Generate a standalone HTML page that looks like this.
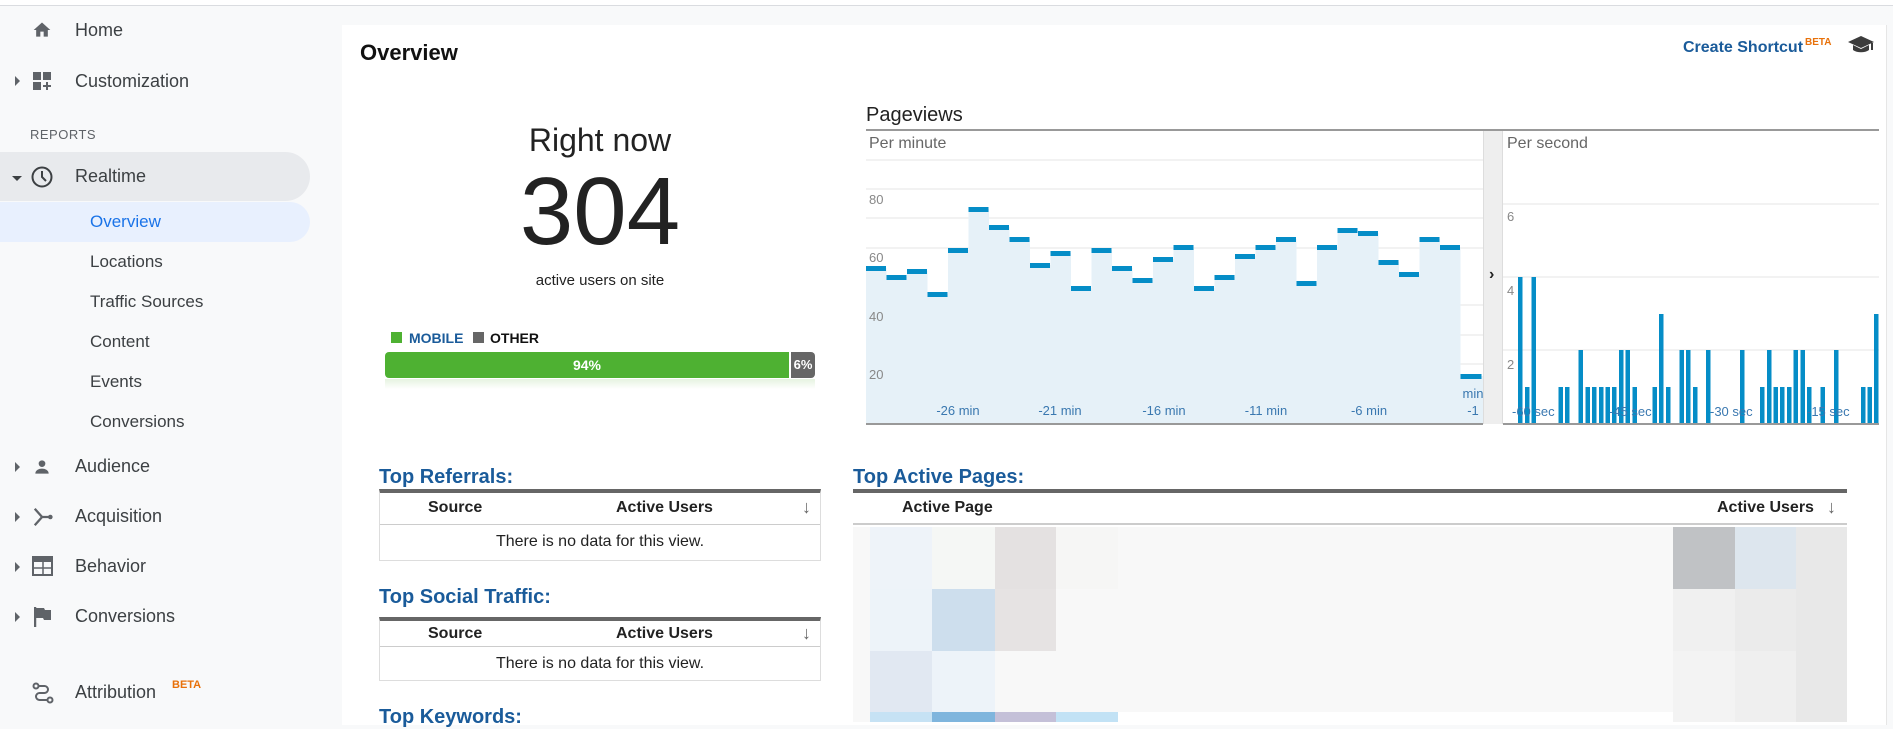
<!DOCTYPE html>
<html><head><meta charset="utf-8">
<style>
*{margin:0;padding:0;box-sizing:border-box}
body{width:1893px;height:722px;overflow:hidden;background:#f8f9fa;font-family:"Liberation Sans",Arial,sans-serif;position:relative;color:#3c4043}
.a{position:absolute;white-space:nowrap}
.nav{font-size:18px;color:#3c4043}
.sub{font-size:17px;color:#3c4043;left:90px}
.tri{position:absolute;width:0;height:0;border-top:5px solid transparent;border-bottom:5px solid transparent;border-left:5px solid #5f6368}
.h{font-weight:bold;color:#1a5b9a;font-size:20px}
.th{font-weight:bold;font-size:16px;color:#222}
</style></head><body>
<div class="a" style="left:0;top:0;width:1893px;height:6px;background:#fff;border-bottom:1px solid #dadce0"></div>
<!-- sidebar -->
<svg class="a" style="left:32px;top:20px" width="20" height="20" viewBox="0 0 24 24"><path d="M10 20v-6h4v6h5v-8h3L12 3 2 12h3v8z" fill="#5f6368"/></svg>
<div class="a nav" style="left:75px;top:20px">Home</div>
<div class="tri" style="left:15px;top:76px"></div>
<svg class="a" style="left:32px;top:71px" width="20" height="20" viewBox="0 0 20 20"><rect x="1" y="1" width="8" height="8" fill="#5f6368"/><rect x="11" y="1" width="8" height="8" fill="#5f6368"/><rect x="1" y="11" width="8" height="8" fill="#5f6368"/><path d="M15 11v8M11 15h8" stroke="#5f6368" stroke-width="2"/></svg>
<div class="a nav" style="left:75px;top:71px">Customization</div>
<div class="a" style="left:30px;top:127px;font-size:13px;color:#5f6368;letter-spacing:.5px">REPORTS</div>
<div class="a" style="left:0;top:152px;width:310px;height:49px;background:#e8eaed;border-radius:0 25px 25px 0"></div>
<div class="a" style="left:12px;top:176px;width:0;height:0;border-left:5px solid transparent;border-right:5px solid transparent;border-top:5px solid #3c4043"></div>
<svg class="a" style="left:30px;top:165px" width="24" height="24" viewBox="0 0 24 24"><circle cx="12" cy="12" r="9.5" fill="none" stroke="#3c4043" stroke-width="2"/><path d="M12 6v6l4 4" fill="none" stroke="#3c4043" stroke-width="2"/></svg>
<div class="a nav" style="left:75px;top:166px">Realtime</div>
<div class="a" style="left:0;top:202px;width:310px;height:40px;background:#e8f0fe;border-radius:0 20px 20px 0"></div>
<div class="a sub" style="top:212px;color:#1a73e8">Overview</div>
<div class="a sub" style="top:252px">Locations</div>
<div class="a sub" style="top:292px">Traffic Sources</div>
<div class="a sub" style="top:332px">Content</div>
<div class="a sub" style="top:372px">Events</div>
<div class="a sub" style="top:412px">Conversions</div>
<div class="tri" style="left:15px;top:462px"></div>
<svg class="a" style="left:32px;top:457px" width="20" height="20" viewBox="0 0 24 24"><circle cx="12" cy="8" r="4" fill="#5f6368"/><path d="M4 20c0-4 4-6 8-6s8 2 8 6z" fill="#5f6368"/></svg>
<div class="a nav" style="left:75px;top:456px">Audience</div>
<div class="tri" style="left:15px;top:512px"></div>
<svg class="a" style="left:32px;top:506px" width="22" height="22" viewBox="0 0 24 24"><path d="M3 3l8 9-8 9M11 12h9" fill="none" stroke="#5f6368" stroke-width="2.5"/><circle cx="20" cy="12" r="2.5" fill="#5f6368"/></svg>
<div class="a nav" style="left:75px;top:506px">Acquisition</div>
<div class="tri" style="left:15px;top:562px"></div>
<svg class="a" style="left:32px;top:556px" width="21" height="20" viewBox="0 0 21 20"><rect x="1" y="1" width="19" height="18" fill="none" stroke="#5f6368" stroke-width="2"/><rect x="1" y="1" width="19" height="5" fill="#5f6368"/><path d="M2 12h17M11 6v13" stroke="#5f6368" stroke-width="1.5"/></svg>
<div class="a nav" style="left:75px;top:556px">Behavior</div>
<div class="tri" style="left:15px;top:612px"></div>
<svg class="a" style="left:34px;top:606px" width="18" height="22" viewBox="0 0 18 22"><path d="M1 1v20" stroke="#5f6368" stroke-width="2.5"/><path d="M2 2h8l1 2h6v10h-7l-1-2H2z" fill="#5f6368"/></svg>
<div class="a nav" style="left:75px;top:606px">Conversions</div>
<svg class="a" style="left:32px;top:682px" width="22" height="22" viewBox="0 0 22 22"><circle cx="4" cy="4" r="2.5" fill="none" stroke="#5f6368" stroke-width="2"/><circle cx="18" cy="18" r="2.5" fill="none" stroke="#5f6368" stroke-width="2"/><path d="M6.5 4h6a3.5 3.5 0 0 1 0 7h-5a3.5 3.5 0 0 0 0 7h8" fill="none" stroke="#5f6368" stroke-width="2"/></svg>
<div class="a nav" style="left:75px;top:682px">Attribution</div>
<div class="a" style="left:172px;top:679px;font-size:11px;font-weight:bold;color:#e8710a">BETA</div>

<!-- main panel -->
<div class="a" style="left:342px;top:25px;width:1545px;height:700px;background:#fff;border-right:1px solid #e6e6e6"></div>
<div class="a" style="left:360px;top:40px;font-size:22px;font-weight:bold;color:#111">Overview</div>
<div class="a" style="left:1683px;top:39px;font-size:16px;font-weight:bold;color:#1a5b9a">Create Shortcut</div>
<div class="a" style="left:1805px;top:37px;font-size:10px;font-weight:bold;color:#e8710a">BETA</div>
<svg class="a" style="left:1847px;top:35px" width="28" height="20" viewBox="0 0 28 20"><path d="M1 7L14 1l13 6-13 6z" fill="#3c3c3c"/><path d="M6 10v5c4 3 12 3 16 0v-5l-8 4z" fill="#3c3c3c"/><path d="M25 8v7" stroke="#3c3c3c" stroke-width="2"/></svg>

<div class="a" style="left:500px;top:122px;width:200px;text-align:center;font-size:32px;color:#222">Right now</div>
<div class="a" style="left:450px;top:162px;width:300px;text-align:center;font-size:96px;line-height:100px;color:#222">304</div>
<div class="a" style="left:480px;top:272px;width:240px;text-align:center;font-size:15px;color:#222">active users on site</div>
<div class="a" style="left:391px;top:332px;width:11px;height:11px;background:#4eb132"></div>
<div class="a" style="left:409px;top:330px;font-size:14px;font-weight:bold;color:#1a5b9a">MOBILE</div>
<div class="a" style="left:473px;top:332px;width:11px;height:11px;background:#666"></div>
<div class="a" style="left:490px;top:330px;font-size:14px;font-weight:bold;color:#111">OTHER</div>
<div class="a" style="left:385px;top:352px;width:404px;height:26px;background:#4eb132;border-radius:4px 0 0 4px;color:#fff;font-weight:bold;font-size:14px;text-align:center;line-height:26px">94%</div>
<div class="a" style="left:791px;top:352px;width:24px;height:26px;background:#666;border-radius:0 4px 4px 0;color:#fff;font-weight:bold;font-size:13px;text-align:center;line-height:26px">6%</div>
<div class="a" style="left:385px;top:379px;width:430px;height:10px;background:linear-gradient(#e6f3e1,#fff)"></div>

<!-- pageviews -->
<div class="a" style="left:866px;top:104px;font-size:20px;color:#222">Pageviews</div>
<div class="a" style="left:866px;top:129px;width:1013px;height:2px;background:#999"></div>
<div class="a" style="left:1483px;top:131px;width:20px;height:293px;background:#eee;border-left:1px solid #ddd;border-right:1px solid #ddd"></div>
<div class="a" style="left:1489px;top:266px;font-size:16px;font-weight:bold;color:#222">›</div>
<div class="a" style="left:869px;top:135px;font-size:16px;color:#666">Per minute</div>
<div class="a" style="left:1507px;top:135px;font-size:16px;color:#666">Per second</div>
<svg class="a" style="left:866px;top:130px" width="617" height="295" viewBox="0 0 617 295">
<g stroke="#eee" stroke-width="1.5"><path d="M0 30H617M0 59H617M0 88H617M0 118H617M0 175H617M0 205H617M0 234H617M0 264H617"/></g>
<g fill="#e6f1f8">
<rect x="0" y="138" width="20.5" height="156"/><rect x="20.5" y="147" width="20.5" height="147"/><rect x="41" y="141" width="20.5" height="153"/><rect x="61.5" y="164" width="20.5" height="130"/><rect x="82" y="120" width="20.5" height="174"/><rect x="102.5" y="79" width="20.5" height="215"/><rect x="123" y="97" width="20.5" height="197"/><rect x="143.5" y="109" width="20.5" height="185"/><rect x="164" y="135" width="20.5" height="159"/><rect x="184.5" y="123" width="20.5" height="171"/><rect x="205" y="158" width="20.5" height="136"/><rect x="225.5" y="120" width="20.5" height="174"/><rect x="246" y="138" width="20.5" height="156"/><rect x="266.5" y="150" width="20.5" height="144"/><rect x="287" y="129" width="20.5" height="165"/><rect x="307.5" y="117" width="20.5" height="177"/><rect x="328" y="158" width="20.5" height="136"/><rect x="348.5" y="147" width="20.5" height="147"/><rect x="369" y="126" width="20.5" height="168"/><rect x="389.5" y="117" width="20.5" height="177"/><rect x="410" y="109" width="20.5" height="185"/><rect x="430.5" y="153" width="20.5" height="141"/><rect x="451" y="117" width="20.5" height="177"/><rect x="471.5" y="100" width="20.5" height="194"/><rect x="492" y="103" width="20.5" height="191"/><rect x="512.5" y="132" width="20.5" height="162"/><rect x="533" y="144" width="20.5" height="150"/><rect x="553.5" y="109" width="20.5" height="185"/><rect x="574" y="117" width="20.5" height="177"/><rect x="594.5" y="246" width="22.5" height="48"/>
</g>
<g fill="#058dc7">
<rect x="0" y="136" width="20" height="5"/><rect x="20.5" y="145" width="20" height="5"/><rect x="41" y="139" width="20" height="5"/><rect x="61.5" y="162" width="20" height="5"/><rect x="82" y="118" width="20" height="5"/><rect x="102.5" y="77" width="20" height="5"/><rect x="123" y="95" width="20" height="5"/><rect x="143.5" y="107" width="20" height="5"/><rect x="164" y="133" width="20" height="5"/><rect x="184.5" y="121" width="20" height="5"/><rect x="205" y="156" width="20" height="5"/><rect x="225.5" y="118" width="20" height="5"/><rect x="246" y="136" width="20" height="5"/><rect x="266.5" y="148" width="20" height="5"/><rect x="287" y="127" width="20" height="5"/><rect x="307.5" y="115" width="20" height="5"/><rect x="328" y="156" width="20" height="5"/><rect x="348.5" y="145" width="20" height="5"/><rect x="369" y="124" width="20" height="5"/><rect x="389.5" y="115" width="20" height="5"/><rect x="410" y="107" width="20" height="5"/><rect x="430.5" y="151" width="20" height="5"/><rect x="451" y="115" width="20" height="5"/><rect x="471.5" y="98" width="20" height="5"/><rect x="492" y="101" width="20" height="5"/><rect x="512.5" y="130" width="20" height="5"/><rect x="533" y="142" width="20" height="5"/><rect x="553.5" y="107" width="20" height="5"/><rect x="574" y="115" width="20" height="5"/><rect x="594.5" y="244" width="21" height="5"/>
</g>
<g font-family="Liberation Sans" font-size="13" fill="#888"><text x="3" y="74">80</text><text x="3" y="132">60</text><text x="3" y="191">40</text><text x="3" y="249">20</text></g>
<g font-family="Liberation Sans" font-size="13" fill="#3a78b0" text-anchor="middle"><text x="92" y="285">-26 min</text><text x="194" y="285">-21 min</text><text x="298" y="285">-16 min</text><text x="400" y="285">-11 min</text><text x="503" y="285">-6 min</text><text x="607" y="285">-1</text><text x="607" y="268">min</text></g>
<path d="M0 294H617" stroke="#999" stroke-width="2"/>
</svg>
<svg class="a" style="left:1503px;top:130px" width="376" height="295" viewBox="0 0 376 295">
<g stroke="#eee" stroke-width="1.5"><path d="M0 74H376M0 147H376M0 220H376"/></g>
<g fill="#058dc7">
<rect x="15" y="147" width="4.5" height="147"/><rect x="22" y="257" width="4.5" height="37"/><rect x="28.5" y="147" width="4.5" height="147"/><rect x="55.5" y="257" width="4.5" height="37"/><rect x="62" y="257" width="4.5" height="37"/><rect x="75.5" y="220" width="4.5" height="74"/><rect x="82.5" y="257" width="4.5" height="37"/><rect x="89" y="257" width="4.5" height="37"/><rect x="96" y="257" width="4.5" height="37"/><rect x="102.5" y="257" width="4.5" height="37"/><rect x="109" y="257" width="4.5" height="37"/><rect x="116" y="220" width="4.5" height="74"/><rect x="122.5" y="220" width="4.5" height="74"/><rect x="129.5" y="257" width="4.5" height="37"/><rect x="149.5" y="257" width="4.5" height="37"/><rect x="156" y="184" width="4.5" height="110"/><rect x="163" y="257" width="4.5" height="37"/><rect x="176.5" y="220" width="4.5" height="74"/><rect x="183" y="220" width="4.5" height="74"/><rect x="190" y="257" width="4.5" height="37"/><rect x="203" y="220" width="4.5" height="74"/><rect x="237" y="220" width="4.5" height="74"/><rect x="257" y="257" width="4.5" height="37"/><rect x="264" y="220" width="4.5" height="74"/><rect x="270.5" y="257" width="4.5" height="37"/><rect x="277" y="257" width="4.5" height="37"/><rect x="284" y="257" width="4.5" height="37"/><rect x="290.5" y="220" width="4.5" height="74"/><rect x="297.5" y="220" width="4.5" height="74"/><rect x="304" y="257" width="4.5" height="37"/><rect x="317.5" y="257" width="4.5" height="37"/><rect x="331" y="220" width="4.5" height="74"/><rect x="358" y="257" width="4.5" height="37"/><rect x="364.5" y="257" width="4.5" height="37"/><rect x="371" y="184" width="4.5" height="110"/>
</g>
<g font-family="Liberation Sans" font-size="13" fill="#888"><text x="4" y="91">6</text><text x="4" y="165">4</text><text x="4" y="239">2</text></g>
<g font-family="Liberation Sans" font-size="13" fill="#3a78b0"><text x="9" y="286">-60 sec</text><text x="106" y="286">-45 sec</text><text x="207" y="286">-30 sec</text><text x="304" y="286">-15 sec</text></g>
<path d="M0 294H376" stroke="#999" stroke-width="2"/>
</svg>

<!-- tables -->
<div class="a h" style="left:379px;top:466px">Top Referrals:</div>
<div class="a" style="left:379px;top:489px;width:442px;height:72px;border:1px solid #ddd;border-top:4px solid #666"></div>
<div class="a" style="left:380px;top:524px;width:440px;height:1px;background:#ccc"></div>
<div class="a th" style="left:428px;top:499px">Source</div>
<div class="a th" style="left:616px;top:499px">Active Users</div>
<div class="a" style="left:802px;top:497px;font-size:18px;color:#666;font-weight:bold">↓</div>
<div class="a" style="left:379px;top:533px;width:442px;text-align:center;font-size:16px;color:#222">There is no data for this view.</div>

<div class="a h" style="left:379px;top:586px">Top Social Traffic:</div>
<div class="a" style="left:379px;top:617px;width:442px;height:64px;border:1px solid #ddd;border-top:4px solid #666"></div>
<div class="a" style="left:380px;top:646px;width:440px;height:1px;background:#ccc"></div>
<div class="a th" style="left:428px;top:625px">Source</div>
<div class="a th" style="left:616px;top:625px">Active Users</div>
<div class="a" style="left:802px;top:623px;font-size:18px;color:#666;font-weight:bold">↓</div>
<div class="a" style="left:379px;top:655px;width:442px;text-align:center;font-size:16px;color:#222">There is no data for this view.</div>
<div class="a h" style="left:379px;top:706px">Top Keywords:</div>

<div class="a h" style="left:853px;top:466px">Top Active Pages:</div>
<div class="a" style="left:853px;top:489px;width:994px;height:4px;background:#666"></div>
<div class="a th" style="left:902px;top:499px">Active Page</div>
<div class="a th" style="left:1717px;top:499px">Active Users</div>
<div class="a" style="left:1827px;top:497px;font-size:18px;color:#666;font-weight:bold">↓</div>
<div class="a" style="left:853px;top:523px;width:994px;height:2px;background:#ccc"></div>
<div class="a" style="left:853px;top:527px;width:994px;height:195px;background:#f8f8f8"></div>
<!-- mosaic -->
<div class="a" style="left:870px;top:527px;width:62px;height:62px;background:#eef3f9"></div>
<div class="a" style="left:932px;top:527px;width:63px;height:62px;background:#f5f7f5"></div>
<div class="a" style="left:995px;top:527px;width:61px;height:62px;background:#e4e1e1"></div>
<div class="a" style="left:1056px;top:527px;width:62px;height:62px;background:#f6f6f5"></div>
<div class="a" style="left:1673px;top:527px;width:62px;height:62px;background:#c0c2c5"></div>
<div class="a" style="left:1735px;top:527px;width:61px;height:62px;background:#dde6ee"></div>
<div class="a" style="left:1796px;top:527px;width:51px;height:195px;background:#e8e8e8"></div>
<div class="a" style="left:870px;top:589px;width:62px;height:62px;background:#edf3f9"></div>
<div class="a" style="left:932px;top:589px;width:63px;height:62px;background:#cddeed"></div>
<div class="a" style="left:995px;top:589px;width:61px;height:62px;background:#e6e3e3"></div>
<div class="a" style="left:1673px;top:589px;width:62px;height:62px;background:#f0f0f0"></div>
<div class="a" style="left:1735px;top:589px;width:61px;height:62px;background:#ebebeb"></div>
<div class="a" style="left:870px;top:651px;width:62px;height:61px;background:#e1e8f2"></div>
<div class="a" style="left:932px;top:651px;width:63px;height:61px;background:#edf3f9"></div>
<div class="a" style="left:1673px;top:651px;width:62px;height:71px;background:#f3f3f3"></div>
<div class="a" style="left:1735px;top:651px;width:61px;height:71px;background:#efefef"></div>
<div class="a" style="left:870px;top:712px;width:62px;height:10px;background:#c6e2f4"></div>
<div class="a" style="left:932px;top:712px;width:63px;height:10px;background:#7fb5dd"></div>
<div class="a" style="left:995px;top:712px;width:61px;height:10px;background:#c4c0d8"></div>
<div class="a" style="left:1056px;top:712px;width:62px;height:10px;background:#c2e2f5"></div>
<div class="a" style="left:1118px;top:712px;width:555px;height:10px;background:#fff"></div>
</body></html>
